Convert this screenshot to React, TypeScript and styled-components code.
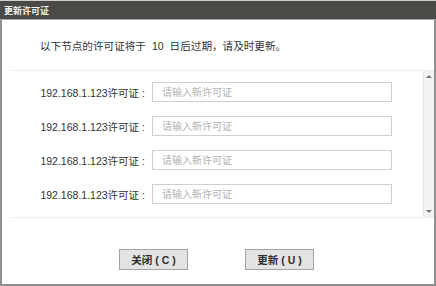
import React from 'react';
import styled, { createGlobalStyle } from 'styled-components';

const GlobalStyle = createGlobalStyle`
    body {
        margin: 0;
        background: #fff;
        font-family: "Liberation Sans", "Noto Sans CJK SC", sans-serif;
    }
`;

const Window = styled.div`
    width: 436px;
    height: 286px;
    display: flex;
    flex-direction: column;
    background: #fff;
`;

const TitleBar = styled.div`
    height: 18px;
    flex: none;
    display: flex;
    align-items: center;
    padding-left: 4px;
    background: #4b4a47;
    border-top: 1px solid #cfcfcf;
    border-bottom: 1px solid #a6a6a6;
    color: #f2f2f2;
    font-size: 9px;
    font-weight: bold;
`;

const Body = styled.div`
    flex: 1;
    display: flex;
    flex-direction: column;
    border: 2px solid #8f8f8f;
    border-top: none;
`;

const Message = styled.div`
    height: 50px;
    display: flex;
    align-items: center;
    padding-left: 38px;
    font-size: 10.6px;
    word-spacing: 3px;
    color: #333;
`;

const ScrollArea = styled.div`
    height: 148px;
    box-sizing: border-box;
    margin-left: 8px;
    display: flex;
    border-top: 1px solid #ededed;
    border-bottom: 1px solid #ededed;
`;

const List = styled.div`
    flex: 1;
    display: flex;
    flex-direction: column;
    gap: 14px;
    padding-top: 11px;
`;

const Row = styled.div`
    display: flex;
    align-items: center;
    height: 20px;
`;

const Label = styled.label`
    width: 135px;
    text-align: right;
    font-size: 10.5px;
    color: #333;
`;

const Colon = styled.span`
    margin-left: 3px;
`;

const Input = styled.input`
    width: 240px;
    height: 20px;
    box-sizing: border-box;
    margin-left: 7px;
    padding: 0 9px;
    border: 1px solid #cfcfcf;
    font-family: inherit;
    font-size: 10px;
    color: #333;
    outline: none;
    &::placeholder {
        color: #b3b3b3;
    }
`;

const Scrollbar = styled.div`
    width: 10px;
    display: flex;
    flex-direction: column;
    justify-content: space-between;
    align-items: center;
    padding: 4px 0;
    background: #f3f3f3;
    border-left: 1px solid #e6e6e6;
`;

const Arrow = styled.div<{ $down?: boolean }>`
    width: 0;
    height: 0;
    border-left: 3px solid transparent;
    border-right: 3px solid transparent;
    ${(p) => (p.$down ? 'border-top: 3px solid #777;' : 'border-bottom: 3px solid #777;')}
`;

const Footer = styled.div`
    flex: 1;
    display: flex;
    justify-content: center;
    align-items: flex-start;
    gap: 57px;
    padding: 31px 3px 0 0;
`;

const Button = styled.button`
    width: 69px;
    height: 21px;
    padding: 0;
    border: 1px solid #a3a3a3;
    background: #e3e3e3;
    font-family: inherit;
    font-size: 10.5px;
    font-weight: bold;
    color: #2e2e2e;
`;

const nodes = ['192.168.1.123', '192.168.1.123', '192.168.1.123', '192.168.1.123'];

export default function App() {
    return (
        <>
            <GlobalStyle />
            <Window>
                <TitleBar>更新许可证</TitleBar>
                <Body>
                    <Message>以下节点的许可证将于 10 日后过期，请及时更新。</Message>
                    <ScrollArea>
                        <List>
                            {nodes.map((ip, i) => (
                                <Row key={i}>
                                    <Label>
                                        {ip}许可证<Colon>:</Colon>
                                    </Label>
                                    <Input placeholder="请输入新许可证" />
                                </Row>
                            ))}
                        </List>
                        <Scrollbar>
                            <Arrow />
                            <Arrow $down />
                        </Scrollbar>
                    </ScrollArea>
                    <Footer>
                        <Button>关闭 ( C )</Button>
                        <Button>更新 ( U )</Button>
                    </Footer>
                </Body>
            </Window>
        </>
    );
}
